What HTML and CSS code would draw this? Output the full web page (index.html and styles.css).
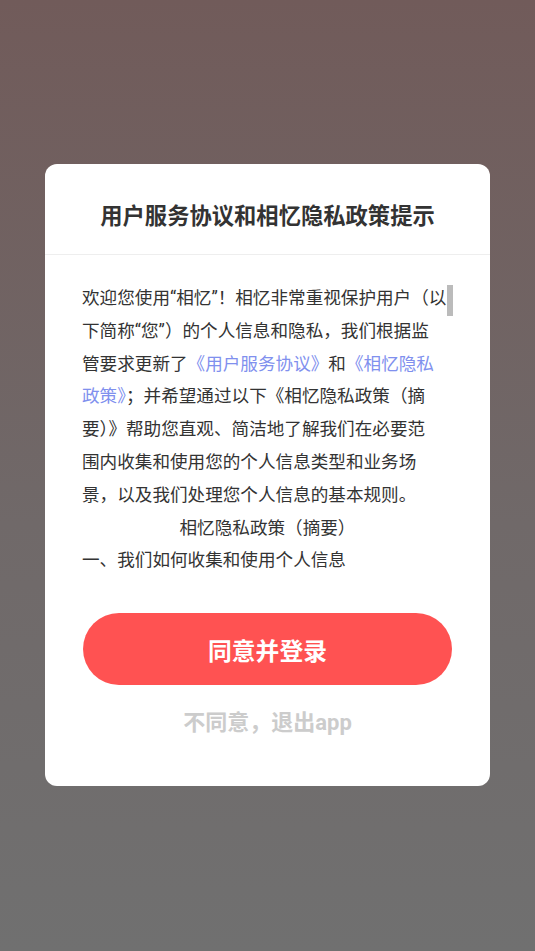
FILE: index.html
```html
<!DOCTYPE html>
<html lang="zh-CN">
<head>
  <meta charset="UTF-8">
  <meta name="viewport" content="width=device-width, initial-scale=1.0">
  <title>用户服务协议和相忆隐私政策提示</title>
  <link rel="stylesheet" href="styles.css">
</head>
<body>
  <div class="mask">
    <div class="dialog">
      <div class="dialog-title">用户服务协议和相忆隐私政策提示</div>
      <div class="dialog-body">
        <div class="scroll-thumb"></div>
        <p class="policy-text">欢迎您使用“相忆”！相忆非常重视保护用户（以<br>下简称“您”）的个人信息和隐私，我们根据监<br>管要求更新了<span class="link">《用户服务协议》</span>和<span class="link">《相忆隐私<br>政策》</span>；并希望通过以下《相忆隐私政策（摘<br>要）》帮助您直观、简洁地了解我们在必要范<br>围内收集和使用您的个人信息类型和业务场<br>景，以及我们处理您个人信息的基本规则。</p>
        <p class="policy-center">相忆隐私政策（摘要）</p>
        <p class="policy-text">一、我们如何收集和使用个人信息</p>
      </div>
      <div class="dialog-actions">
        <button class="btn-agree">同意并登录</button>
        <button class="btn-exit">不同意，退出app</button>
      </div>
    </div>
  </div>
</body>
</html>
```

FILE: styles.css
```css
body {
  margin: 0;
  padding: 0;
  font-family: Roboto, "Noto Sans CJK SC", sans-serif;
}
.mask {
  height: 951px;
  background: linear-gradient(to bottom, #715b5a 0%, #706969 55%, #707070 100%);
  display: flex;
  justify-content: center;
  padding-top: 164px;
  box-sizing: border-box;
}
.dialog {
  width: 445px;
  height: 622px;
  background-color: #fff;
  border-radius: 12px;
  display: flex;
  flex-direction: column;
}
.dialog-title {
  padding: 38px 0 24px;
  line-height: 28px;
  font-size: 22.3px;
  font-weight: bold;
  color: #333;
  text-align: center;
  border-bottom: 1px solid #eee;
}
.dialog-body {
  position: relative;
  margin: 27px 0 0 37px;
  width: 371px;
  height: 293px;
  overflow: hidden;
  font-size: 17.6px;
  line-height: 32.8px;
  color: #333;
}
.dialog-body p {
  margin: 0;
  white-space: nowrap;
}
.policy-center {
  text-align: center;
}
.link {
  color: #8090ee;
}
.scroll-thumb {
  position: absolute;
  top: 3px;
  right: 0;
  width: 6px;
  height: 31px;
  background-color: #bbb;
  z-index: 2;
}
.dialog-actions {
  display: flex;
  flex-direction: column;
  align-items: center;
  padding: 38px 38px 0 38px;
}
.btn-agree {
  width: 369px;
  height: 72px;
  border: none;
  border-radius: 36px;
  background-color: #ff5252;
  color: #fff;
  font-family: Roboto, "Noto Sans CJK SC", sans-serif;
  font-size: 23.8px;
  font-weight: bold;
}
.btn-exit {
  margin-top: 19px;
  border: none;
  background: none;
  color: #ccc;
  font-family: Roboto, "Noto Sans CJK SC", sans-serif;
  font-size: 22px;
  font-weight: bold;
  line-height: 36px;
}
```
